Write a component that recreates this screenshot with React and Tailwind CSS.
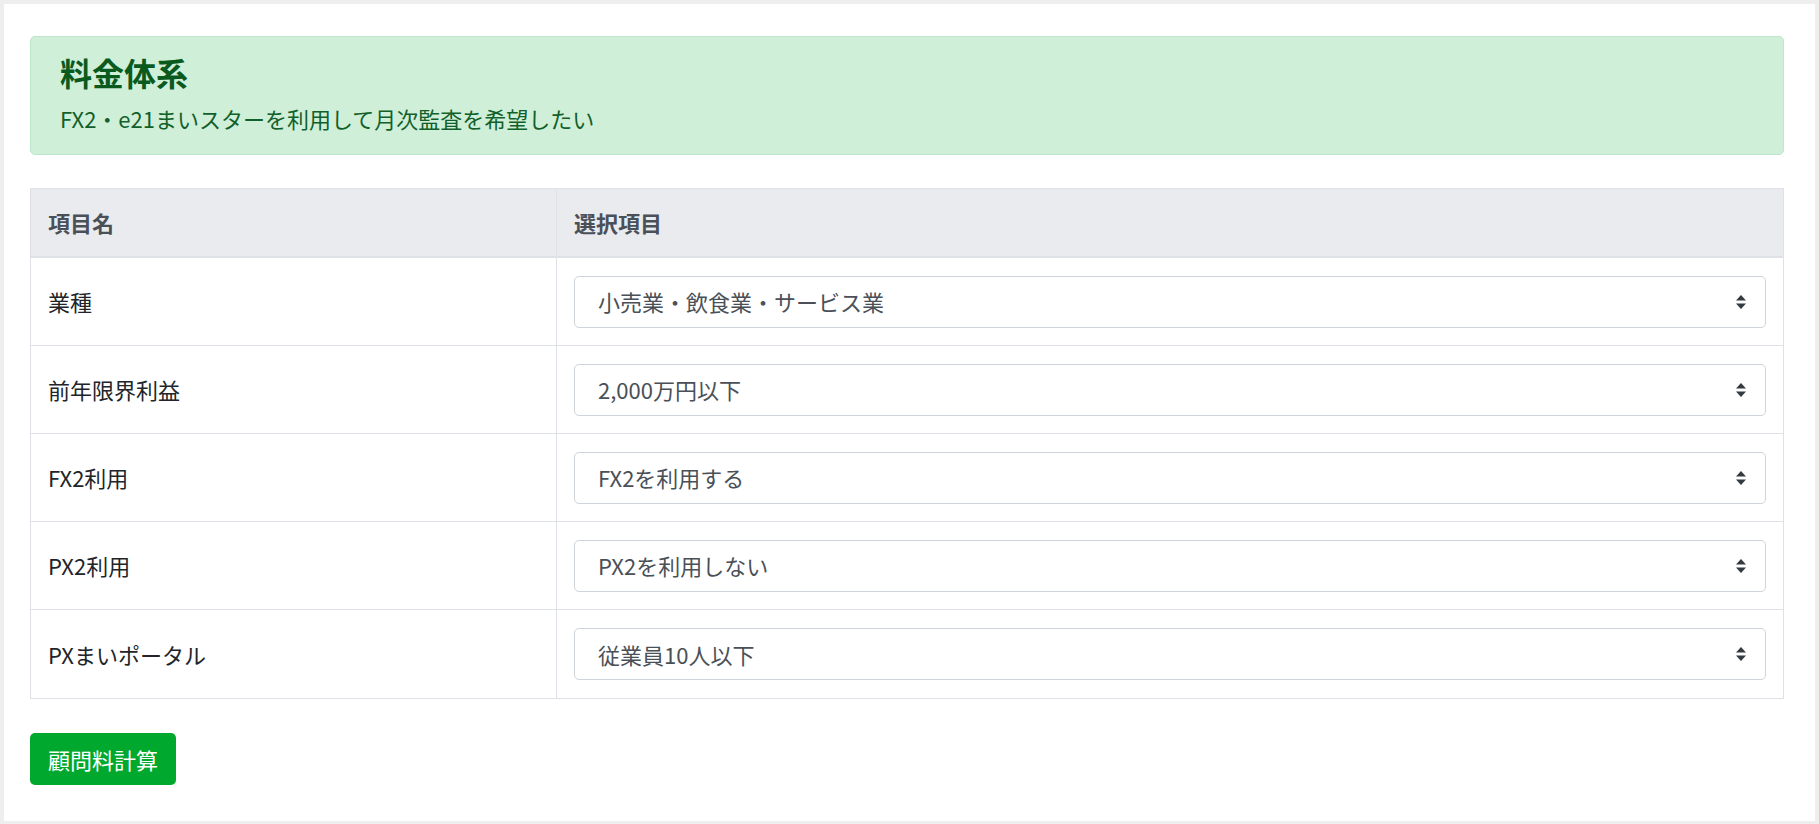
import { useState } from 'react';

const FONT = { fontFamily: '"Noto Sans CJK JP", "Noto Sans", sans-serif' };

const ROWS = [
  { label: '業種', value: '小売業・飲食業・サービス業', options: ['小売業・飲食業・サービス業', '製造業・建設業', 'その他'] },
  { label: '前年限界利益', value: '2,000万円以下', options: ['2,000万円以下', '2,000万円超 5,000万円以下', '5,000万円超'] },
  { label: 'FX2利用', value: 'FX2を利用する', options: ['FX2を利用する', 'FX2を利用しない'] },
  { label: 'PX2利用', value: 'PX2を利用しない', options: ['PX2を利用する', 'PX2を利用しない'] },
  { label: 'PXまいポータル', value: '従業員10人以下', options: ['従業員10人以下', '従業員11人以上'] },
];

function SelectArrows() {
  return (
    <svg width="12" height="16" viewBox="0 0 12 16" className="absolute right-[19px] top-1/2 -translate-y-1/2 pointer-events-none">
      <path d="M6 1 L11 6.5 L1 6.5 Z" fill="#343a40" />
      <path d="M1 9.5 L11 9.5 L6 15 Z" fill="#343a40" />
    </svg>
  );
}

function FieldSelect({ row }) {
  const [value, setValue] = useState(row.value);
  return (
    <div className="relative w-full">
      <select
        value={value}
        onChange={(e) => setValue(e.target.value)}
        className="w-full h-[52px] appearance-none bg-white border border-[#ced4da] rounded-[5px] pl-[23px] pr-10 text-[22px] text-[#495057] focus:outline-none"
        style={FONT}
      >
        {row.options.map((o) => (
          <option key={o} value={o}>{o}</option>
        ))}
      </select>
      <SelectArrows />
    </div>
  );
}

export default function App() {
  return (
    <div className="min-h-screen bg-[#eeeeee] p-[4px]" style={FONT}>
      <div className="bg-white min-h-[816px] pl-[26px] pr-[31px] pt-[32px] pb-[36px]">
        {/* Alert */}
        <div className="bg-[#cfefd9] border border-[#bce7c9] rounded-[5px] pl-[29px] pr-6 pt-[16px] h-[119px]">
          <h4 className="text-[#0b5a1d] text-[32px] leading-[38px] font-bold">料金体系</h4>
          <p className="text-[#11602a] text-[22px] leading-[32px] mt-[11px]">FX2・e21まいスターを利用して月次監査を希望したい</p>
        </div>

        {/* Table */}
        <div className="mt-[33px] border border-[#dee2e6]">
          <div className="grid grid-cols-[526px_1fr] bg-[#e9ebef] h-[69px] border-b-2 border-[#dee2e6]">
            <div className="border-r border-[#dee2e6] flex items-center pl-[17px] text-[22px] font-bold text-[#495057]">項目名</div>
            <div className="flex items-center pl-[17px] text-[22px] font-bold text-[#495057]">選択項目</div>
          </div>
          {ROWS.map((row, i) => (
            <div
              key={row.label}
              className={`grid grid-cols-[526px_1fr] h-[88px] ${i < ROWS.length - 1 ? 'border-b border-[#dee2e6]' : ''}`}
            >
              <div className="border-r border-[#dee2e6] flex items-center pl-[17px] text-[22px] text-[#212529]">{row.label}</div>
              <div className="flex items-center px-[17px]">
                <FieldSelect row={row} />
              </div>
            </div>
          ))}
        </div>

        {/* Button */}
        <button className="mt-[34px] h-[52px] px-[18px] rounded-[5px] bg-[#00a82e] text-white text-[22px]" style={FONT}>
          顧問料計算
        </button>
      </div>
    </div>
  );
}
